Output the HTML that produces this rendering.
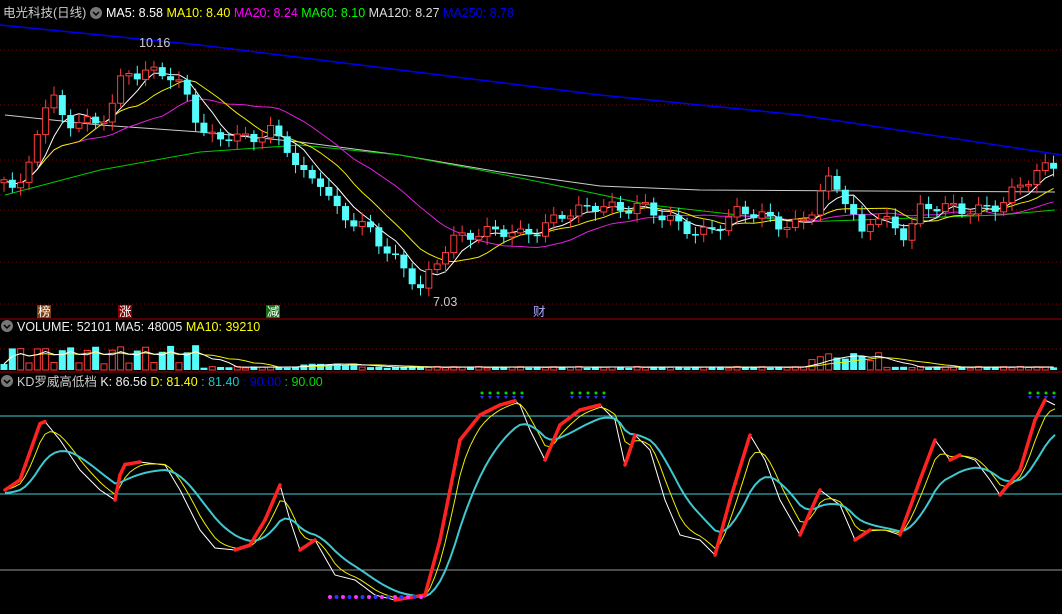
<!DOCTYPE html>
<html><head><meta charset="utf-8"><style>
html,body{margin:0;padding:0;background:#000;width:1062px;height:614px;overflow:hidden}
svg{display:block}
text{font-family:"Liberation Sans","Noto Sans CJK SC",sans-serif;font-size:12.5px}
</style></head><body>
<svg id="s" width="1062" height="614" xmlns="http://www.w3.org/2000/svg">
<rect width="1062" height="614" fill="#000"/>
<g stroke="#8a0000" stroke-dasharray="1,3">
<line x1="0" y1="50" x2="1062" y2="50"/><line x1="0" y1="105" x2="1062" y2="105"/><line x1="0" y1="160" x2="1062" y2="160"/><line x1="0" y1="210" x2="1062" y2="210"/><line x1="0" y1="262" x2="1062" y2="262"/><line x1="0" y1="304" x2="1062" y2="304"/><line x1="0" y1="349" x2="1062" y2="349"/>
</g>
<line x1="0" y1="319" x2="1062" y2="319" stroke="#a00000"/>
<line x1="0" y1="372" x2="1062" y2="372" stroke="#a00000"/>
<line x1="0" y1="416" x2="1062" y2="416" stroke="#3fd0d8"/>
<line x1="0" y1="494" x2="1062" y2="494" stroke="#3fd0d8"/>
<line x1="0" y1="570" x2="1062" y2="570" stroke="#999"/>
<g id="g"></g>
<text x="3" y="17" fill="#ccc" font-size="13.5">电光科技(日线)</text>
<circle cx="96" cy="13" r="6" fill="#777"/><path d="M93 12l3 3 3-3" stroke="#000" fill="none" stroke-width="1.5"/>
<text x="106" y="17" font-size="13"><tspan fill="#fff">MA5: 8.58 </tspan><tspan fill="#ff0"> MA10: 8.40 </tspan><tspan fill="#f0f"> MA20: 8.24 </tspan><tspan fill="#0f0"> MA60: 8.10 </tspan><tspan fill="#ddd"> MA120: 8.27 </tspan><tspan fill="#0000ee"> MA250: 8.78</tspan></text>
<text x="139" y="47" fill="#ccc">10.16</text>
<text x="433" y="306" fill="#ccc">7.03</text>
<rect x="37" y="305" width="14" height="13" fill="#7a3d10"/><text x="38" y="316" fill="#fff">榜</text>
<rect x="118" y="305" width="14" height="13" fill="#8a0000"/><text x="119" y="316" fill="#fff">涨</text>
<rect x="266" y="305" width="14" height="13" fill="#176e17"/><text x="267" y="316" fill="#fff">减</text>
<text x="533" y="316" fill="#aaf">财</text>
<circle cx="7" cy="326" r="6" fill="#777"/><path d="M4 325l3 3 3-3" stroke="#000" fill="none" stroke-width="1.5"/>
<text x="17" y="331" font-size="13"><tspan fill="#eee">VOLUME: 52101  MA5: 48005 </tspan><tspan fill="#ff0"> MA10: 39210</tspan></text>
<circle cx="7" cy="381" r="6" fill="#777"/><path d="M4 380l3 3 3-3" stroke="#000" fill="none" stroke-width="1.5"/>
<text x="17" y="386" font-size="13"><tspan fill="#ccc">KD罗威高低档 </tspan><tspan fill="#eee">K: 86.56 </tspan><tspan fill="#ff0">D: 81.40 </tspan><tspan fill="#1cc"> : 81.40 </tspan><tspan fill="#00e"> : 90.00 </tspan><tspan fill="#0d0"> : 90.00</tspan></text>
</svg>
<script>
var NS="http://www.w3.org/2000/svg",g=document.getElementById('g');
function el(t,a){var e=document.createElementNS(NS,t);for(var k in a)e.setAttribute(k,a[k]);g.appendChild(e);return e;}
function interp(pts,x){for(var i=1;i<pts.length;i++){if(x<=pts[i][0]){var a=pts[i-1],b=pts[i];return a[1]+(b[1]-a[1])*(x-a[0])/(b[0]-a[0]);}}return pts[pts.length-1][1];}
function line(pts,c,w){el('polyline',{points:pts.map(p=>p[0].toFixed(1)+','+p[1].toFixed(1)).join(' '),fill:'none',stroke:c,'stroke-width':w||1});}
var P=[[5,180],[25,185],[40,120],[50,90],[65,125],[80,120],[95,125],[110,110],[125,70],[140,75],[160,70],[175,80],[190,100],[200,130],[215,140],[230,135],[250,140],[270,130],[290,150],[300,175],[320,180],[335,210],[350,220],[370,230],[390,255],[410,275],[420,290],[435,265],[450,240],[470,235],[500,230],[520,235],[540,230],[560,215],[580,210],[600,205],[620,210],[640,205],[660,215],[680,225],[700,235],[720,225],[740,210],[760,215],[780,225],[800,225],[815,205],[825,180],[835,185],[850,205],[860,240],[870,220],[880,215],[895,230],[905,235],[920,210],[940,205],[960,210],[980,210],[1000,205],[1020,185],[1040,170],[1055,165]];
line([[0,25],[200,45],[400,70],[600,95],[800,115],[1062,155]],'#0000ee',1.5);
line([[5,115],[100,125],[200,132],[300,142],[400,155],[500,172],[600,186],[700,190],[1055,192]],'#ccc');
line([[5,195],[100,170],[200,152],[300,145],[400,155],[480,170],[540,182],[650,205],[800,222],[1000,215],[1055,210]],'#0c0');
var N=127,cl=[],xs=[];
for(var i=0;i<N;i++){var x=4+i*8.33;xs.push(x);cl.push(interp(P,x)+Math.sin(i*1.7)*6);}
function ma(n){var r=[];for(var i=0;i<N;i++){var s=0,c=0;for(var j=Math.max(0,i-n+1);j<=i;j++){s+=cl[j];c++;}r.push([xs[i],s/c]);}return r;}
line(ma(20),'#e020e0');line(ma(10),'#ee0');line(ma(5),'#fff');
for(var i=0;i<N;i++){var o=i?cl[i-1]:cl[0]+3,c=cl[i],up=c<o,t=Math.min(o,c),b=Math.max(o,c);if(b-t<1.5)b=t+1.5;
var hi=t-3-Math.abs(Math.sin(i*2.3))*6,lo=b+3+Math.abs(Math.cos(i*1.9))*6,x=xs[i];
var col=up?'#ff3c3c':'#54fcfc';el('line',{x1:x,y1:hi,x2:x,y2:lo,stroke:col});
if(up)el('rect',{x:x-3,y:t,width:6,height:b-t,fill:'#000',stroke:col});else el('rect',{x:x-3.5,y:t,width:7,height:b-t,fill:col});}
var V=[];for(var i=0;i<N;i++){var x=xs[i],h=2+Math.abs(Math.sin(i*1.3))*1.5;if(x<200)h+=4+Math.pow(Math.abs(Math.sin(i*2.1)),3)*22;if(x>300&&x<360)h+=3;if(x>810&&x<880)h+=4+Math.abs(Math.sin(i))*10;V.push(h);
var up=i&&cl[i]<cl[i-1],col=up?'#ff3c3c':'#54fcfc';
if(up)el('rect',{x:x-3,y:370-h,width:6,height:h,fill:'#000',stroke:col});else el('rect',{x:x-3.5,y:370-h,width:7,height:h,fill:col});}
function vma(n){var r=[];for(var i=0;i<N;i++){var s=0,c=0;for(var j=Math.max(0,i-n+1);j<=i;j++){s+=V[j];c++;}r.push([xs[i],370-s/c]);}return r;}
line(vma(10),'#ee0');line(vma(5),'#fff');
var K=[[5,490],[20,480],[42,418],[60,440],[80,470],[100,490],[115,500],[122,465],[140,462],[165,465],[180,490],[200,530],[215,548],[235,550],[250,545],[265,520],[280,485],[290,520],[300,550],[315,540],[335,575],[355,580],[375,595],[395,600],[425,595],[440,540],[460,440],[480,415],[500,405],[518,400],[530,430],[545,460],[560,425],[580,410],[600,405],[615,420],[625,465],[635,435],[650,450],[665,500],[680,535],[700,540],[715,555],[730,500],[750,435],[765,460],[780,500],[800,535],[820,490],[840,505],[855,540],[870,530],[885,530],[900,535],[920,480],[935,440],[950,460],[960,455],[975,460],[990,480],[1000,495],[1020,470],[1035,420],[1045,400],[1055,405]];
var ks=[];for(var x=5;x<=1056;x+=5)ks.push([x,interp(K,x)]);
var d=[],y2=[],a=ks[0][1],b=ks[0][1];ks.forEach(function(p){a+=(p[1]-a)*0.16;b+=(p[1]-b)*0.4;d.push([p[0],a+3]);y2.push([p[0],b]);});
line(ks,'#fff');line(y2,'#ee0');line(d,'#3fc8d0',2);
for(var i=1;i<ks.length;i++)if(ks[i][1]<ks[i-1][1]-0.5)el('line',{x1:ks[i-1][0],y1:ks[i-1][1],x2:ks[i][0],y2:ks[i][1],stroke:'#f22','stroke-width':3.5,'stroke-linecap':'round'});
for(var x=330;x<=425;x+=6.5)el('circle',{cx:x,cy:597,r:2,fill:(Math.round((x-330)/6.5)%2?'#33f':'#f3f')});
[[482,525],[572,605],[1030,1055]].forEach(function(r){for(var x=r[0];x<=r[1];x+=8){el('circle',{cx:x,cy:393,r:1.5,fill:'#0d0'});el('path',{d:'M'+(x-2)+' 396l2 3 2-3z',fill:'#33f'});}});
</script>
</body></html>
